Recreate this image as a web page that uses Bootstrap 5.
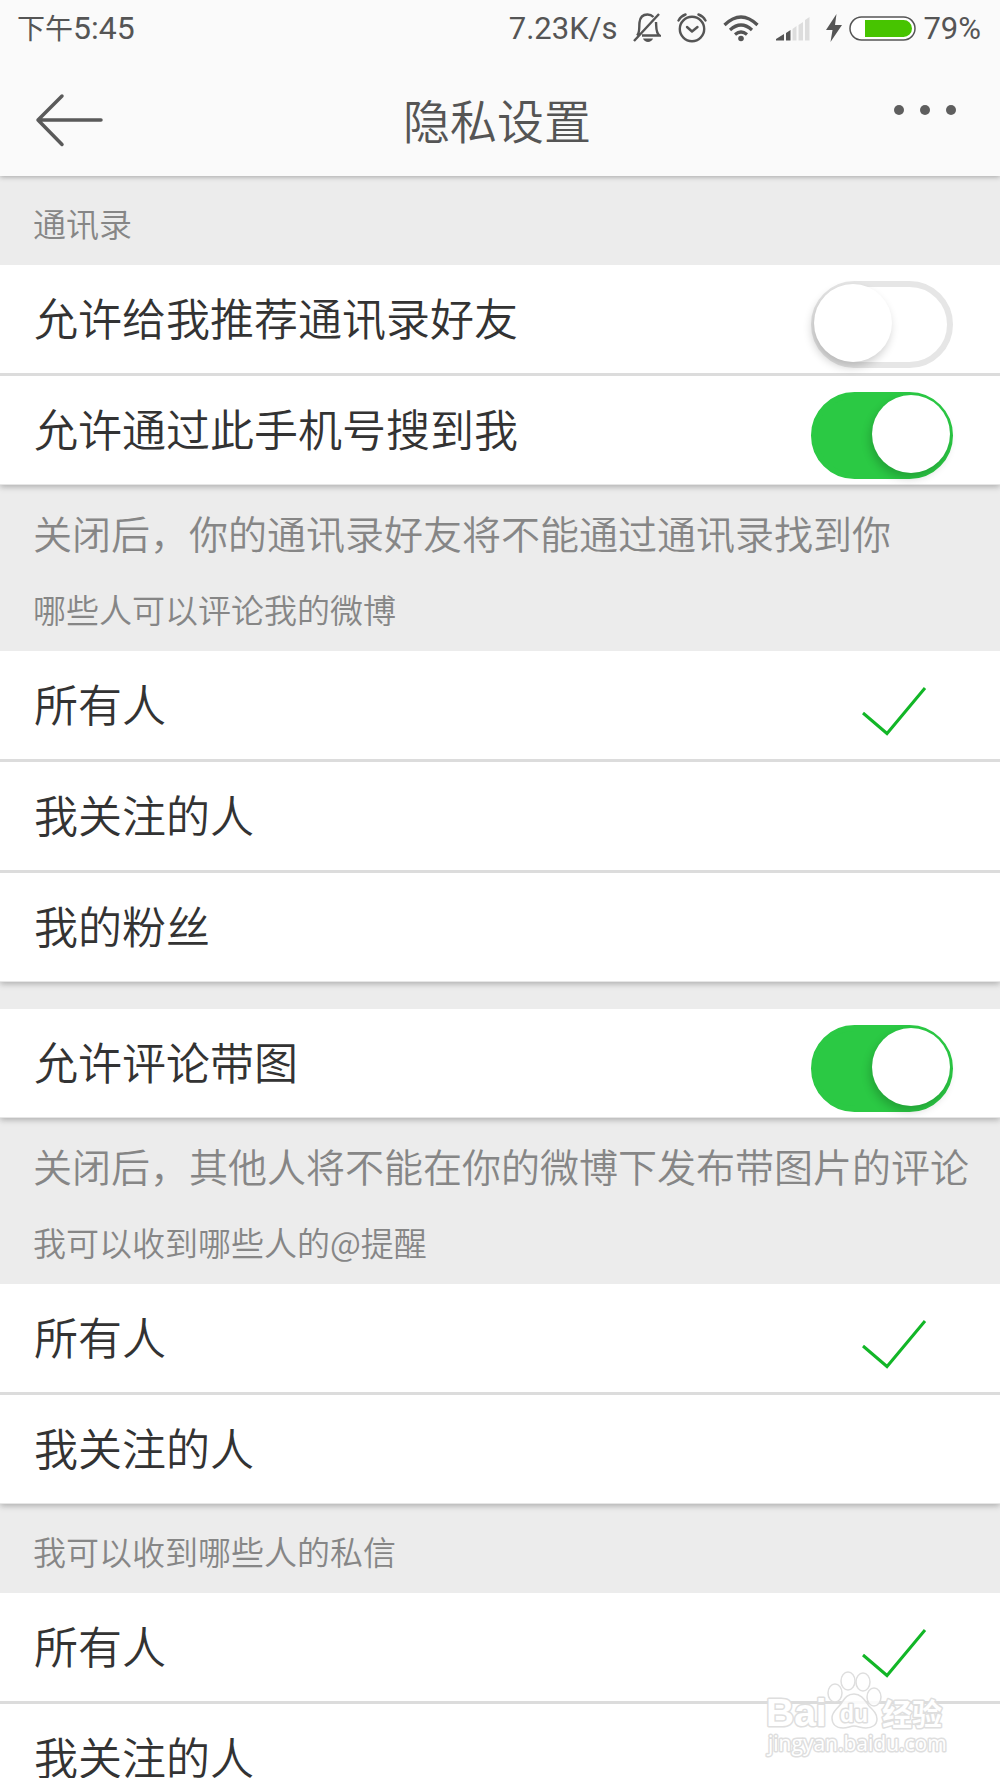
<!DOCTYPE html>
<html lang="zh-CN">
<head>
<meta charset="utf-8">
<meta name="viewport" content="width=device-width, initial-scale=1">
<title>隐私设置</title>
<link href="https://cdn.jsdelivr.net/npm/bootstrap@5.3.0/dist/css/bootstrap.min.css" rel="stylesheet">
<style>
  body { font-family: "Noto Sans CJK SC", sans-serif; font-weight: 350; background: #ececec; color: #333; }
  .app-top { background: #fafafa; color: #555; box-shadow: 0 1px 5px rgba(0,0,0,.3); z-index: 2; }
  .status-bar { height: 56px; padding: 2px 19px 0 17px; font-family: Roboto, "Noto Sans CJK SC", sans-serif; font-weight: 400; font-size: 31px; line-height: 56px; }
  .status-time { font-size: 32px; }
  .status-cjk { font-size: 28px; }
  .status-icons { gap: 16px; }
  .status-icons svg { margin-bottom: 2px; }
  .status-power { gap: 7px; }
  .title-bar { height: 120px; padding: 0 40px 0 34px; }
  .title-bar h1 { font-size: 47px; line-height: 64px; padding-top: 6px; font-weight: inherit; }
  .icon-button { width: 72px; height: 72px; color: inherit; }
  .icon-button svg { display: block; }
  .app-scroll { scrollbar-width: none; }
  .app-scroll::-webkit-scrollbar { display: none; }
  .group-title, .group-note { padding: 23px 0 0 33px; line-height: 48px; color: #868686; white-space: nowrap; }
  .group-title { font-size: 33px; padding-bottom: 18px; font-weight: inherit; }
  .group-note { font-size: 39px; padding-bottom: 6px; }
  .setting-group { border-bottom: 1px solid #e6e6e6; background: #fff; box-shadow: 0 2px 6px rgba(0,0,0,.26); clip-path: inset(0 0 -12px 0); }
  .setting-gap { margin-top: 27px; }
  .setting-item { min-height: 108px; padding: 0 47px 5px 34px; font-size: 44px; line-height: 60px; }
  .setting-item + .setting-item { border-top: 3px solid #dcdcdc; min-height: 111px; }
  .toggle { appearance: none; position: relative; flex: none; width: 142px; height: 87px; margin: 15px 0 0; border: 6px solid #e6e6e6; border-radius: 44px; background: #fff; }
  .toggle::before { content: ""; position: absolute; left: -3px; top: -3px; width: 78px; height: 78px; border-radius: 50%; background: #fff; box-shadow: -2px 5px 10px rgba(0,0,0,.2); }
  .toggle:checked { background: #2bc944; border-color: #2bc944; }
  .toggle:checked::before { left: 55px; }
  .tick { display: none; margin: 16px 26px 0 0; }
  .btn-check:checked ~ .tick { display: block; }
  .watermark { right: 50px; bottom: 18px; z-index: 3; pointer-events: none; }
</style>
<script src="https://cdn.jsdelivr.net/npm/bootstrap@5.3.0/dist/js/bootstrap.bundle.min.js"></script>
</head>
<body>
<svg class="d-none" aria-hidden="true">
  <symbol id="tick" viewBox="0 0 66 50"><path d="M2 27 26 47.500 64 2" fill="none" stroke="#12b627" stroke-width="3"/></symbol>
</svg>
<div class="vh-100 d-flex flex-column overflow-hidden position-relative">
  <header class="app-top position-relative flex-shrink-0">
    <div class="status-bar d-flex justify-content-between align-items-center">
      <div class="status-time"><span class="status-cjk">下午</span>5:45</div>
      <div class="status-icons d-flex align-items-center">
        <span>7.23K/s</span>
        <svg width="28" height="30" viewBox="0 0 28 30" fill="none" stroke="#555" stroke-width="2.400">
          <path d="M4 22.500C7 20 6 14 6.500 9.500C7 4.500 10 1.500 14.500 1.500C17 1.500 19 2.500 20.500 4M23 9C23.500 14 22.500 20 26.500 22.500H9M1 28 26 1"/>
          <path d="M10 25.500H20C18.500 30 11.500 30 10 25.500Z" fill="#555" stroke="none"/>
        </svg>
        <svg width="30" height="30" viewBox="0 0 30 30" fill="none" stroke="#555" stroke-width="2.400" stroke-linecap="round" stroke-linejoin="round">
          <circle cx="15" cy="16" r="12.200"/><path d="M10 14 15 18.500 20.500 14"/><path d="M1.500 7.500Q4 3 8.500 1.500M28.500 7.500Q26 3 21.500 1.500"/>
        </svg>
        <svg width="36" height="28" viewBox="0 0 36 28" fill="none" stroke="#555" stroke-width="3.200">
          <path d="M1.500 11Q18-5 34.500 11M7 16Q18 6 29 16M12 20.500Q18 15.500 24 20.500"/><circle cx="18" cy="24.500" r="2.800" fill="#555" stroke="none"/>
        </svg>
        <svg width="35" height="25" viewBox="0 0 35 25" fill="#ddd">
          <path d="M1 24.500V23L9 18V24.500ZM11 17 15.500 14V24.500H11Z" fill="#555"/>
          <path d="M17.500 13 21.500 10V24.500H17.500ZM23.500 9 28 6V24.500H23.500ZM30 4 34.500 1V24.500H30Z"/>
        </svg>
        <div class="status-power d-flex align-items-center">
          <svg width="16" height="28" viewBox="0 0 16 28"><path d="M10.500 0 0 16H6.500L4.500 28 16 11H9Z" fill="#555"/></svg>
          <svg width="67" height="25" viewBox="0 0 67 25">
            <rect x="1" y="1" width="65" height="23" rx="11.500" fill="#fff" stroke="#555" stroke-width="1.500"/>
            <path d="M16 4H54.500A8.500 8.500 0 0 1 54.500 21H16Z" fill="#47c400"/>
          </svg>
          <span>79%</span>
        </div>
      </div>
    </div>
    <div class="title-bar d-flex justify-content-between align-items-center">
      <button type="button" class="icon-button btn p-0 border-0" aria-label="返回">
        <svg width="72" height="72" viewBox="0 0 72 72" fill="none" stroke="#5a5a5a" stroke-width="3.500" stroke-linecap="round" stroke-linejoin="round"><path d="M67 40H4M28 16 4 40 28 64.500"/></svg>
      </button>
      <h1 class="m-0">隐私设置</h1>
      <button type="button" class="icon-button btn p-0 border-0" aria-label="更多">
        <svg width="72" height="72" viewBox="0 0 72 72" fill="#5e5e5e"><circle cx="11" cy="30" r="5"/><circle cx="37" cy="30" r="5"/><circle cx="63" cy="30" r="5"/></svg>
      </button>
    </div>
  </header>

  <main class="app-scroll flex-grow-1 overflow-auto">
    <h2 class="group-title m-0">通讯录</h2>
    <div class="setting-group">
      <label class="setting-item d-flex align-items-center justify-content-between">允许给我推荐通讯录好友<input class="toggle" type="checkbox" role="switch"></label>
      <label class="setting-item d-flex align-items-center justify-content-between">允许通过此手机号搜到我<input class="toggle" type="checkbox" role="switch" checked></label>
    </div>
    <p class="group-note m-0">关闭后，你的通讯录好友将不能通过通讯录找到你</p>

    <h2 class="group-title m-0">哪些人可以评论我的微博</h2>
    <div class="setting-group">
      <label class="setting-item d-flex align-items-center justify-content-between">所有人<input class="btn-check" type="radio" name="comment" checked><svg class="tick" width="66" height="50"><use href="#tick"/></svg></label>
      <label class="setting-item d-flex align-items-center justify-content-between">我关注的人<input class="btn-check" type="radio" name="comment"><svg class="tick" width="66" height="50"><use href="#tick"/></svg></label>
      <label class="setting-item d-flex align-items-center justify-content-between">我的粉丝<input class="btn-check" type="radio" name="comment"><svg class="tick" width="66" height="50"><use href="#tick"/></svg></label>
    </div>
    <div class="setting-group setting-gap">
      <label class="setting-item d-flex align-items-center justify-content-between">允许评论带图<input class="toggle" type="checkbox" role="switch" checked></label>
    </div>
    <p class="group-note m-0">关闭后，其他人将不能在你的微博下发布带图片的评论</p>

    <h2 class="group-title m-0">我可以收到哪些人的@提醒</h2>
    <div class="setting-group">
      <label class="setting-item d-flex align-items-center justify-content-between">所有人<input class="btn-check" type="radio" name="mention" checked><svg class="tick" width="66" height="50"><use href="#tick"/></svg></label>
      <label class="setting-item d-flex align-items-center justify-content-between">我关注的人<input class="btn-check" type="radio" name="mention"><svg class="tick" width="66" height="50"><use href="#tick"/></svg></label>
    </div>

    <h2 class="group-title m-0">我可以收到哪些人的私信</h2>
    <div class="setting-group">
      <label class="setting-item d-flex align-items-center justify-content-between">所有人<input class="btn-check" type="radio" name="message" checked><svg class="tick" width="66" height="50"><use href="#tick"/></svg></label>
      <label class="setting-item d-flex align-items-center justify-content-between">我关注的人<input class="btn-check" type="radio" name="message"><svg class="tick" width="66" height="50"><use href="#tick"/></svg></label>
    </div>
  </main>

  <svg class="watermark position-absolute" width="190" height="96" viewBox="0 0 190 96" fill="#fff" fill-opacity=".85" stroke="#dedede" stroke-width="1.500" aria-hidden="true">
    <ellipse cx="88" cy="17" rx="7" ry="9"/><ellipse cx="103" cy="18" rx="7" ry="9"/><ellipse cx="75" cy="29" rx="7" ry="9"/><ellipse cx="114" cy="33" rx="7" ry="9"/>
    <path d="M94 30C102 30 105 37 109 42C114 47 117 50 117 55C117 61 112 64 106 64C101 64 98 62 94 62C90 62 88 64 83 64C76 64 72 60 72 54C72 48 76 46 80 41C84 36 86 30 94 30Z"/>
    <g paint-order="stroke" fill-opacity="1" stroke-width="3" stroke-linejoin="round" font-weight="700">
      <text x="6" y="62" font-family="Liberation Sans, sans-serif" font-size="39">Bai</text>
      <text x="80" y="58" font-family="Liberation Sans, sans-serif" font-size="23">du</text>
      <text x="122" y="61" font-family="Noto Sans CJK SC, sans-serif" font-size="30">经验</text>
      <text x="8" y="87" font-family="Open Sans, sans-serif" font-size="21" font-weight="400">jingyan.baidu.com</text>
    </g>
  </svg>
</div>
</body>
</html>
